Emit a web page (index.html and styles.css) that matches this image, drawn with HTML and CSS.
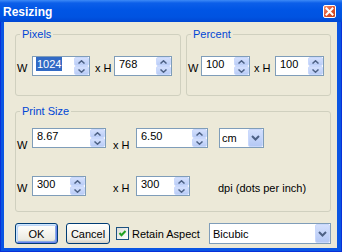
FILE: index.html
```html
<!DOCTYPE html>
<html lang="en">
<head>
    <meta charset="UTF-8">
    <meta name="viewport" content="width=device-width, initial-scale=1.0">
    <title>Resizing</title>
    <link rel="stylesheet" href="styles.css">
</head>
<body>
    <div class="window">
        <div class="titlebar">
            <span class="title">Resizing</span>
            <span class="close">
                <svg width="11" height="11" viewBox="0 0 11 11"><path d="M2.5 2.5 L8.5 8.5 M8.5 2.5 L2.5 8.5" stroke="#fff" stroke-width="2" stroke-linecap="square"/></svg>
            </span>
        </div>
        <div class="body">
            <div class="top-groups">
                <fieldset class="group pixels">
                    <legend>Pixels</legend>
                    <div class="pair">
                        <span class="lbl lbl-w">W</span>
                        <div class="spin w58">
                            <span class="val"><span class="sel">1024</span></span>
                            <span class="arrows">
                                <span><svg width="7" height="4" viewBox="0 0 7 4"><path d="M0.5 3.5 L3.5 0.8 L6.5 3.5" fill="none" stroke="#4d6185" stroke-width="1.5"/></svg></span>
                                <span><svg width="7" height="4" viewBox="0 0 7 4"><path d="M0.5 0.5 L3.5 3.2 L6.5 0.5" fill="none" stroke="#4d6185" stroke-width="1.5"/></svg></span>
                            </span>
                        </div>
                        <span class="lbl lbl-xh">x H</span>
                        <div class="spin w58">
                            <span class="val">768</span>
                            <span class="arrows">
                                <span><svg width="7" height="4" viewBox="0 0 7 4"><path d="M0.5 3.5 L3.5 0.8 L6.5 3.5" fill="none" stroke="#4d6185" stroke-width="1.5"/></svg></span>
                                <span><svg width="7" height="4" viewBox="0 0 7 4"><path d="M0.5 0.5 L3.5 3.2 L6.5 0.5" fill="none" stroke="#4d6185" stroke-width="1.5"/></svg></span>
                            </span>
                        </div>
                    </div>
                </fieldset>
                <fieldset class="group percent">
                    <legend>Percent</legend>
                    <div class="pair">
                        <span class="lbl lbl-w">W</span>
                        <div class="spin w49">
                            <span class="val">100</span>
                            <span class="arrows">
                                <span><svg width="7" height="4" viewBox="0 0 7 4"><path d="M0.5 3.5 L3.5 0.8 L6.5 3.5" fill="none" stroke="#4d6185" stroke-width="1.5"/></svg></span>
                                <span><svg width="7" height="4" viewBox="0 0 7 4"><path d="M0.5 0.5 L3.5 3.2 L6.5 0.5" fill="none" stroke="#4d6185" stroke-width="1.5"/></svg></span>
                            </span>
                        </div>
                        <span class="lbl lbl-xh">x H</span>
                        <div class="spin w49">
                            <span class="val">100</span>
                            <span class="arrows">
                                <span><svg width="7" height="4" viewBox="0 0 7 4"><path d="M0.5 3.5 L3.5 0.8 L6.5 3.5" fill="none" stroke="#4d6185" stroke-width="1.5"/></svg></span>
                                <span><svg width="7" height="4" viewBox="0 0 7 4"><path d="M0.5 0.5 L3.5 3.2 L6.5 0.5" fill="none" stroke="#4d6185" stroke-width="1.5"/></svg></span>
                            </span>
                        </div>
                    </div>
                </fieldset>
            </div>

            <fieldset class="group print">
                <legend>Print Size</legend>
                <div class="print-grid">
                    <span class="lbl low">W</span>
                    <div class="spin w74">
                        <span class="val">8.67</span>
                        <span class="arrows">
                            <span><svg width="7" height="4" viewBox="0 0 7 4"><path d="M0.5 3.5 L3.5 0.8 L6.5 3.5" fill="none" stroke="#4d6185" stroke-width="1.5"/></svg></span>
                            <span><svg width="7" height="4" viewBox="0 0 7 4"><path d="M0.5 0.5 L3.5 3.2 L6.5 0.5" fill="none" stroke="#4d6185" stroke-width="1.5"/></svg></span>
                        </span>
                    </div>
                    <span class="lbl low">x H</span>
                    <div class="spin w72">
                        <span class="val">6.50</span>
                        <span class="arrows">
                            <span><svg width="7" height="4" viewBox="0 0 7 4"><path d="M0.5 3.5 L3.5 0.8 L6.5 3.5" fill="none" stroke="#4d6185" stroke-width="1.5"/></svg></span>
                            <span><svg width="7" height="4" viewBox="0 0 7 4"><path d="M0.5 0.5 L3.5 3.2 L6.5 0.5" fill="none" stroke="#4d6185" stroke-width="1.5"/></svg></span>
                        </span>
                    </div>
                    <div class="combo w45">
                        <span class="txt">cm</span>
                        <span class="drop"><svg width="9" height="6" viewBox="0 0 9 6"><path d="M1 1 L4.5 4.5 L8 1" fill="none" stroke="#4d6185" stroke-width="2"/></svg></span>
                    </div>

                    <span class="lbl">W</span>
                    <div class="spin w54">
                        <span class="val">300</span>
                        <span class="arrows">
                            <span><svg width="7" height="4" viewBox="0 0 7 4"><path d="M0.5 3.5 L3.5 0.8 L6.5 3.5" fill="none" stroke="#4d6185" stroke-width="1.5"/></svg></span>
                            <span><svg width="7" height="4" viewBox="0 0 7 4"><path d="M0.5 0.5 L3.5 3.2 L6.5 0.5" fill="none" stroke="#4d6185" stroke-width="1.5"/></svg></span>
                        </span>
                    </div>
                    <span class="lbl">x H</span>
                    <div class="spin w54">
                        <span class="val">300</span>
                        <span class="arrows">
                            <span><svg width="7" height="4" viewBox="0 0 7 4"><path d="M0.5 3.5 L3.5 0.8 L6.5 3.5" fill="none" stroke="#4d6185" stroke-width="1.5"/></svg></span>
                            <span><svg width="7" height="4" viewBox="0 0 7 4"><path d="M0.5 0.5 L3.5 3.2 L6.5 0.5" fill="none" stroke="#4d6185" stroke-width="1.5"/></svg></span>
                        </span>
                    </div>
                    <span class="lbl">dpi (dots per inch)</span>
                </div>
            </fieldset>

            <div class="actions">
                <button class="btn ok">OK</button>
                <button class="btn cancel">Cancel</button>
                <label class="check">
                    <span class="box">
                        <svg width="11" height="11" viewBox="0 0 11 11"><path d="M2.5 5 L4.5 7.2 L8.5 3" fill="none" stroke="#21a121" stroke-width="2"/></svg>
                    </span>
                    Retain Aspect
                </label>
                <div class="combo wide">
                    <span class="txt">Bicubic</span>
                    <span class="drop"><svg width="9" height="6" viewBox="0 0 9 6"><path d="M1 1 L4.5 4.5 L8 1" fill="none" stroke="#4d6185" stroke-width="2"/></svg></span>
                </div>
            </div>
        </div>
    </div>
</body>
</html>
```

FILE: styles.css
```css
* {
    box-sizing: border-box;
}

body {
    margin: 0;
    font-family: "Liberation Sans", Arial, sans-serif;
    font-size: 11px;
    color: #000;
}

svg {
    display: block;
}

.window {
    width: 342px;
    height: 252px;
    display: flex;
    flex-direction: column;
    background: #0a55e3;
    box-shadow: inset 1px 0 #0831d9, inset -1px 0 #0831d9, inset 0 -1px #0831d9;
}

/* title bar */
.titlebar {
    height: 22px;
    display: flex;
    justify-content: space-between;
    align-items: flex-start;
    padding: 0 6px 0 3px;
    background: linear-gradient(#3d8af7 0, #0c5fe9 3px, #0055e5 10px, #0053e1 17px, #0047d4 22px);
}

.title {
    color: #fff;
    font-weight: bold;
    font-size: 12px;
    line-height: 20px;
    padding-top: 2px;
}

.close {
    width: 13px;
    height: 13px;
    margin-top: 5px;
    border: 1px solid #fff;
    border-radius: 2px;
    background: linear-gradient(135deg, #f39374, #e0542f 50%, #c4401c);
    display: flex;
    align-items: center;
    justify-content: center;
}

/* dialog body */
.body {
    flex: 1;
    margin: 0 5px 4px 4px;
    background: #ece9d8;
    padding: 6px 6px 0 11px;
}

.top-groups {
    display: flex;
    gap: 5px;
}

.group {
    margin: 0;
    min-width: 0;
    border: 1px solid #d0d0bf;
    border-radius: 3px;
    padding: 15px 0 19px 1px;
}

.group legend {
    margin-left: 3px;
    padding: 0 2px;
    color: #0046d5;
    line-height: 13px;
}

.pixels {
    width: 166px;
}

.percent {
    width: 145px;
}

.pair {
    display: flex;
    align-items: flex-start;
}

.pair > * {
    flex-shrink: 0;
}

.lbl {
    line-height: 13px;
    margin-top: 6px;
    white-space: nowrap;
}

.lbl.low {
    margin-top: 11px;
}

.pixels .lbl-w {
    width: 15px;
}

.pixels .lbl-xh {
    margin-left: 5px;
    width: 19px;
}

.percent .lbl-w {
    width: 13px;
}

.percent .lbl-xh {
    margin-left: 4px;
    width: 21px;
}

/* spin boxes */
.spin {
    height: 20px;
    display: flex;
    border: 1px solid #7f9db9;
    background: #fff;
}

.spin .val {
    flex: 1;
    padding-left: 4px;
    line-height: 14px;
}

.sel {
    display: inline-block;
    background: #316ac5;
    color: #fff;
    padding: 0 1px;
    margin-left: -1px;
}

.arrows {
    width: 15px;
    display: flex;
    flex-direction: column;
}

.arrows span {
    flex: 1;
    border: 1px solid #c9d8fc;
    border-radius: 2px;
    background: linear-gradient(#d4e0fd, #b9ccf6);
    display: flex;
    align-items: center;
    justify-content: center;
}

.w58 { width: 58px; }
.w49 { width: 49px; }
.w74 { width: 74px; }
.w72 { width: 72px; }
.w54 { width: 54px; }
.w45 { width: 45px; }

/* print size */
.print {
    width: 316px;
    margin-top: 9px;
    padding: 10px 0 15px 1px;
}

.print-grid {
    display: grid;
    grid-template-columns: 15px 81px 23px 82px 1fr;
    row-gap: 24px;
    align-items: start;
}

.print-grid .combo {
    margin-left: 1px;
}

/* combo boxes */
.combo {
    height: 20px;
    display: flex;
    align-items: center;
    border: 1px solid #7f9db9;
    background: #fff;
    padding-left: 2px;
}

.combo .txt {
    flex: 1;
}

.combo .drop {
    width: 15px;
    align-self: stretch;
    border: 1px solid #c9d8fc;
    border-radius: 2px;
    background: linear-gradient(#d4e0fd, #b4c8f5);
    display: flex;
    align-items: center;
    justify-content: center;
}

.combo.wide {
    width: 122px;
    height: 21px;
    margin-left: auto;
    padding-left: 3px;
}

/* bottom row */
.actions {
    margin-top: 11px;
    display: flex;
    align-items: center;
}

.actions > * {
    flex-shrink: 0;
}

.btn {
    height: 21px;
    border: 1px solid #003c74;
    border-radius: 3px;
    background: linear-gradient(#fff, #f7f6f1 40%, #ecebe3 80%, #d6d0c5);
    font: inherit;
    color: #000;
    padding: 0;
}

.ok {
    width: 43px;
    box-shadow: inset 1px 1px 0 #cee7ff, inset -1px -1px 0 #6982ee, inset 2px 2px 0 #bcd4f6, inset -2px -2px 0 #89ade4;
}

.cancel {
    width: 44px;
    margin-left: 8px;
}

.check {
    display: flex;
    align-items: center;
    margin-left: 6px;
    white-space: nowrap;
}

.check .box {
    width: 13px;
    height: 13px;
    margin-right: 3px;
    border: 1px solid #1c5180;
    background: linear-gradient(135deg, #dcdcd7, #fff);
    display: flex;
    align-items: center;
    justify-content: center;
}
```
